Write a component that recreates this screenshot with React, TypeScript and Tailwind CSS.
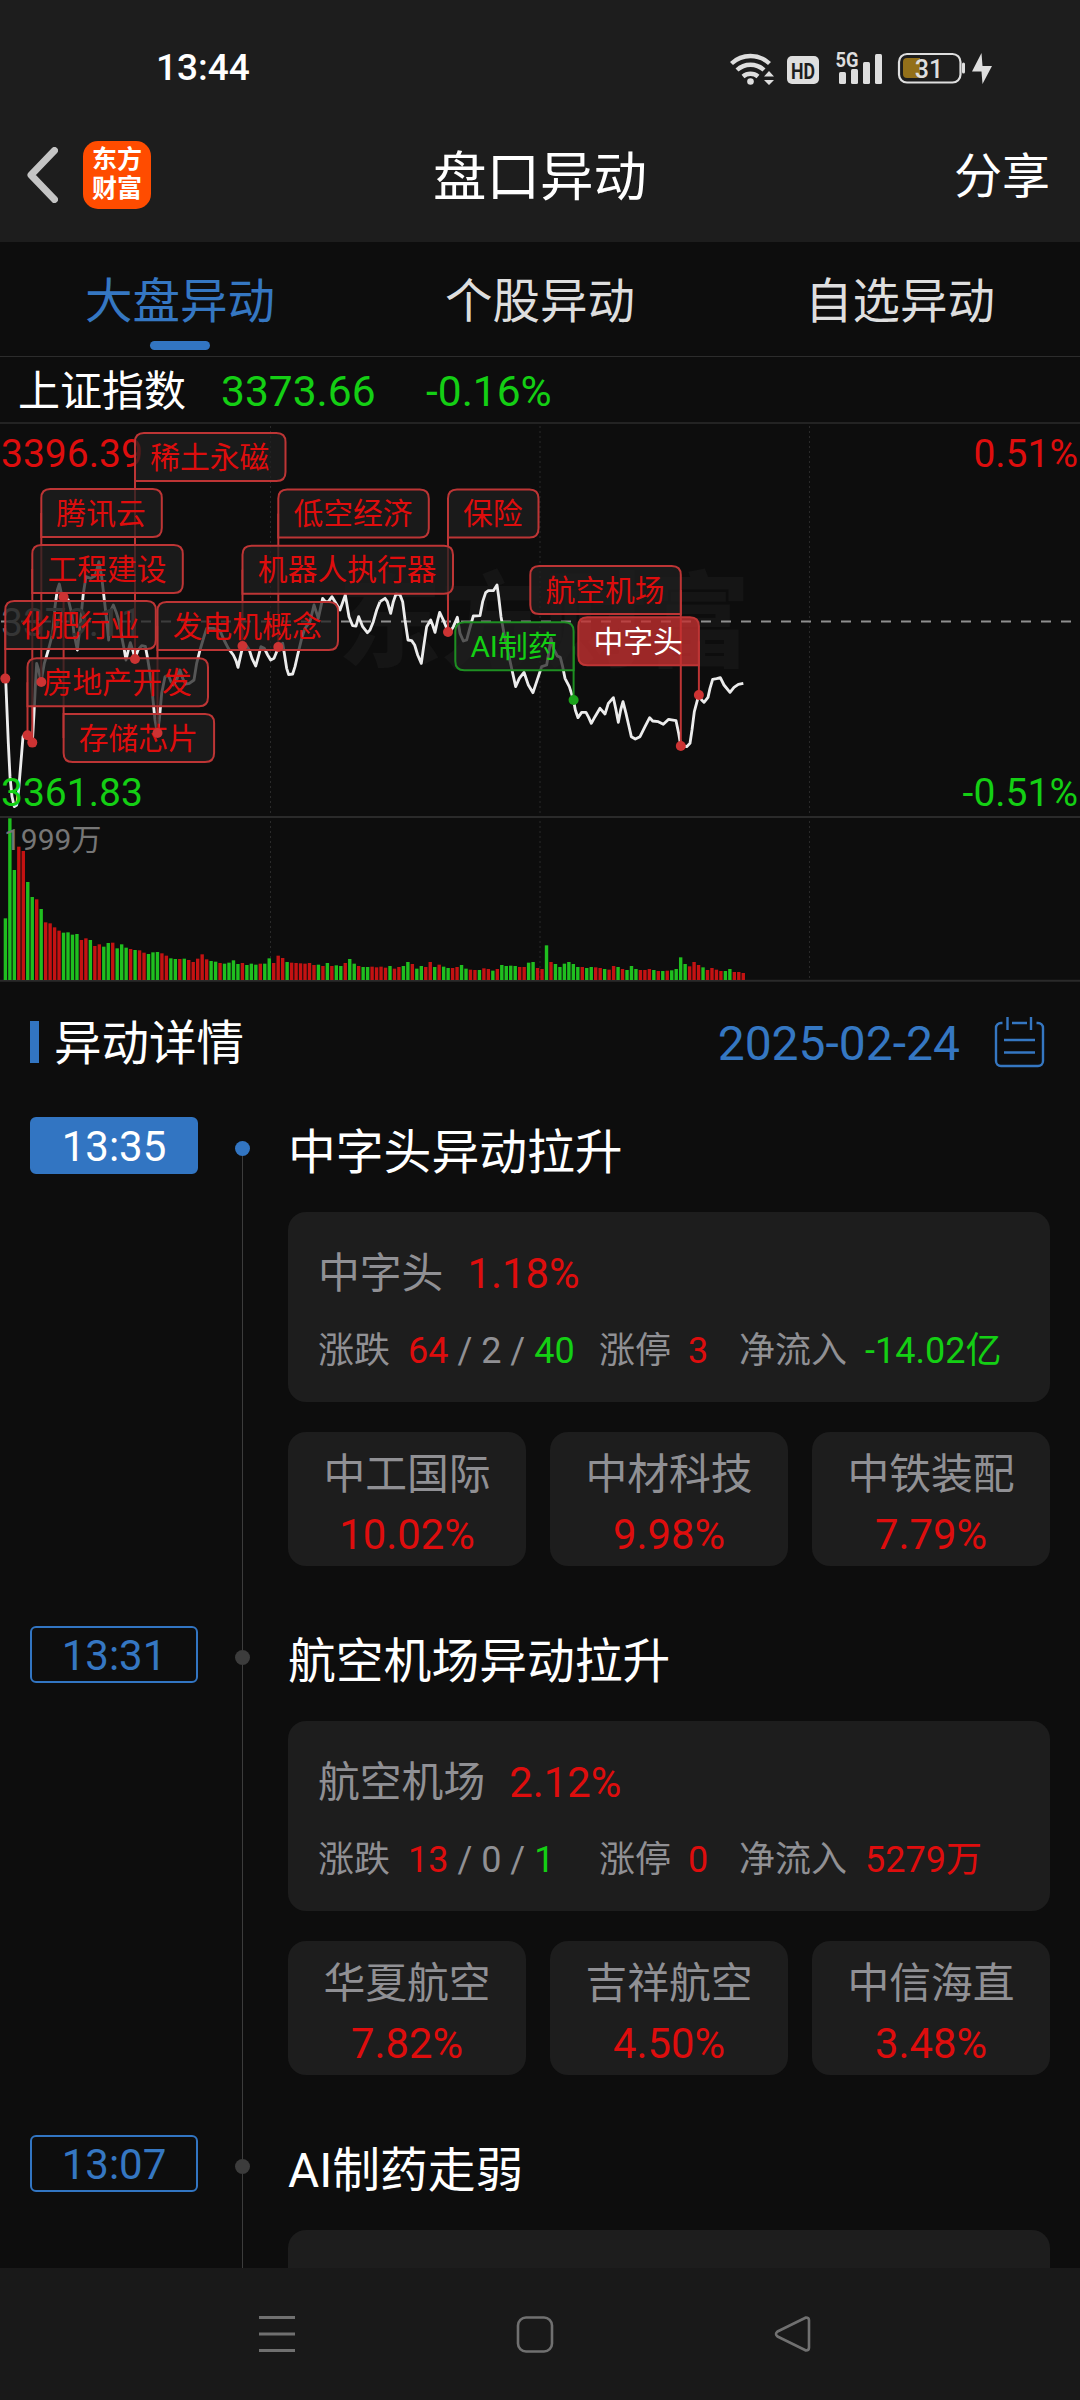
import clsx from "clsx";
import React from "react";

const RED = "#de0d0d";
const GREEN = "#14cf14";

// minute volumes, negative = falling minute
const volumes = [
  -185, -485, -330, 400, 387, -294, -249, 242, -213, 173, 170, 158, 148, -142,
  -143, -136, -138, 120, 125, -120, 102, 107, -100, -111, 112, -95, -107, -97,
  93, -90, 89, 82, -78, -83, -84, 80, 73, -65, -63, 63, -64, 60, 54, 64, 77, 62,
  -57, -55, 51, -49, -52, -59, -48, 51, -45, -49, -46, 49, -49, -65, 51, 73, 66,
  -54, 52, 51, 50, 49, 51, 45, -46, 42, -51, 42, -44, -42, 51, -63, -49, 42,
  -39, -39, 40, 38, 40, 37, -42, 34, 39, -42, -54, 48, -34, -42, 39, 54, -39,
  46, -40, -36, 36, 39, -45, -34, 31, 30, -30, 35, 33, -28, 33, -45, -42, -43,
  -42, 39, 39, -52, -54, 36, 33, -104, 54, -48, -39, -49, -54, -48, -39, 39,
  -36, -39, 38, 36, -33, 31, 42, -39, 33, -30, -42, -33, 30, 30, 33, -30, 27,
  -27, 28, -29, -33, -68, -48, 41, 54, 45, -38, 30, 36, 31, 27, -27, -33, 24,
  24, 21,
];

// price line, in thirds of a pixel
const morning =
  "17,775 20,850 25,970 30,1070 36,1130 43,1160 50,1155 56,1110 60,1060 65,1000 69,950 76,940 83,945 90,960 97,968 102,880 106,800 110,730 116,750 123,785 133,730 145,690 158,640 165,560 172,510 178,492 184,520 190,530 205,540 215,580 222,640 232,690 240,620 250,520 258,470 272,475 285,468 297,425 305,470 313,540 320,600 326,660 333,570 340,555 348,575 356,600 365,650 372,685 378,720 385,690 391,668 398,690 405,716 414,690 425,677 436,679 442,710 450,760 458,830 465,900 472,940 478,900 485,820 495,770 505,765 513,785 520,795 530,780 540,750 548,775 556,792 568,790 582,780 590,730 600,690 612,650 620,625 640,625 660,632 672,660 685,685 700,705 708,722 714,742 720,715 728,680 740,678 748,690 756,715 767,738 775,710 783,680 793,685 803,705 812,720 822,715 830,695 836,681 848,670 853,700 860,745 866,764 878,762 885,740 893,705 905,655 915,625 930,605 942,555 955,595 968,535 976,545 985,545 996,530 1005,545 1020,570 1036,525 1047,590 1058,617 1068,618 1076,590 1088,620 1102,638 1110,630 1120,605 1130,570 1140,545";
const afternoon =
  "0,545 15,535 22,545 32,580 40,545 48,522 60,524 68,545 75,600 84,660 95,662 104,675 113,705 124,730 131,680 140,620 152,600 158,615 165,637 172,605 179,577 190,600 200,625 210,636 220,620 232,592 240,640 250,663 260,660 268,630 280,588 300,587 308,545 317,518 325,512 340,512 351,495 356,530 363,590 372,640 385,700 396,750 407,800 418,775 432,757 445,795 459,818 470,785 485,740 500,735 506,700 513,655 520,685 532,708 541,712 548,740 555,775 568,800 580,838 586,870 594,893 605,877 618,877 626,892 634,910 645,890 660,865 675,882 685,850 700,833 707,865 715,907 722,870 729,845 738,880 746,915 754,950 766,957 780,950 795,920 809,893 818,903 835,905 850,913 866,898 888,902 896,940 902,976 920,980 930,970 936,930 943,875 956,826 965,840 972,847 984,832 990,805 998,778 1010,776 1021,773 1032,795 1050,817 1062,802 1075,793 1090,790";

type Flag = {
  text: string;
  x: number;
  y: number;
  w: number;
  dotY: number;
  right?: boolean;
  kind?: "down" | "active";
};

const flags: Flag[] = [
  { text: "稀土永磁", x: 135, y: 9, w: 150.5, dotY: 235 },
  { text: "腾讯云", x: 41.3, y: 65, w: 120.5, dotY: 258 },
  { text: "低空经济", x: 278.3, y: 65.6, w: 150.5, dotY: 223 },
  { text: "保险", x: 448, y: 65.6, w: 90.5, dotY: 208 },
  { text: "工程建设", x: 32.3, y: 121, w: 150.5, dotY: 318.6 },
  { text: "机器人执行器", x: 242.5, y: 121.7, w: 210.5, dotY: 222 },
  { text: "航空机场", x: 530.3, y: 142, w: 150.5, dotY: 322, right: true },
  { text: "化肥行业", x: 5.3, y: 177, w: 150.5, dotY: 254.6 },
  { text: "发电机概念", x: 157.5, y: 178, w: 180.5, dotY: 309 },
  { text: "AI制药", x: 455.3, y: 198.3, w: 118.3, dotY: 276, right: true, kind: "down" },
  { text: "房地产开发", x: 27.5, y: 234.3, w: 180.5, dotY: 311.3 },
  { text: "存储芯片", x: 63.6, y: 290, w: 150.5, dotY: 173 },
  { text: "中字头", x: 578.3, y: 193.3, w: 120.6, dotY: 271, right: true, kind: "active" },
];

const FLAG_H = 48;

const strokeOf = (f: Flag) => (f.kind === "down" ? "#1e8f22" : "#bd3535");
const poleX = (f: Flag) => (f.right ? f.x + f.w : f.x);

function flagPath({ x, y, w, right, dotY }: Flag) {
  const r = 9;
  const above = dotY < y;
  const bl = !right && !above ? 0 : r;
  const br = right ? 0 : r;
  const tl = !right && above ? 0 : r;
  return `M${x + tl} ${y}H${x + w - r}q${r} 0 ${r} ${r}V${y + FLAG_H - br}q0 ${br} ${-br} ${br}H${x + bl}q${-bl} 0 ${-bl} ${-bl}V${y + tl}q0 ${-tl} ${tl} ${-tl}Z`;
}

function Chart() {
  return (
    <svg width="1080" height="558" className="block" fontSize="39">
      <text x="338" y="235" fontSize="103" fontWeight="900" fill="#151515">
        东方财富
      </text>
      <g stroke="#2a2a2a" strokeWidth="1" strokeDasharray="2 3">
        <path d="M270.5 2V556M540 2V556M809.5 2V556" />
      </g>
      <path d="M0 393H1080M0 556.8H1080" stroke="#2a2a2a" strokeWidth="2" />
      <path d="M1 197.5H1080" stroke="#8f8f8f" strokeWidth="2.2" strokeDasharray="10 10" />

      {volumes.map((v, i) => (
        <rect
          key={i}
          x={3.7 + i * 4.472}
          y={556 - Math.abs(v) / 3}
          width="3.4"
          height={Math.abs(v) / 3}
          fill={v < 0 ? "#1fbf1f" : "#c41212"}
        />
      ))}

      <g
        transform="translate(0 -4) scale(0.33333)"
        fill="none"
        stroke="#ececec"
        strokeWidth="8.5"
        strokeLinejoin="round"
      >
        <polyline points={morning} />
        <polyline points={afternoon} transform="translate(1140 0)" />
      </g>

      <text x="1" y="43" fill={RED}>3396.39</text>
      <text x="1078" y="43" fill={RED} textAnchor="end">0.51%</text>
      <text x="1" y="212" fill="#707070">3379.11</text>
      <text x="1" y="382" fill={GREEN}>3361.83</text>
      <text x="1078" y="382" fill={GREEN} textAnchor="end">-0.51%</text>
      <text x="4" y="426" fontSize="30" fill="#767676">1999万</text>

      {flags.map((f) => (
        <path
          key={f.text}
          d={`M${poleX(f)} ${f.y + FLAG_H / 2}V${f.dotY}`}
          stroke={strokeOf(f)}
          strokeWidth="2"
        />
      ))}
      {flags.map((f) => (
        <g key={f.text}>
          <path
            d={flagPath(f)}
            fill={f.kind === "active" ? "rgba(197,48,48,.78)" : "rgba(32,32,32,.735)"}
            stroke={strokeOf(f)}
            strokeWidth="2"
          />
          <text
            x={f.x + f.w / 2 - 0.5}
            y={f.y + 34.5}
            fontSize="29.8"
            textAnchor="middle"
            fill={f.kind === "active" ? "#fff" : f.kind === "down" ? GREEN : RED}
          >
            {f.text}
          </text>
        </g>
      ))}
      {flags.map((f) => (
        <circle
          key={f.text}
          cx={poleX(f)}
          cy={f.dotY}
          r="5"
          fill={f.kind === "down" ? "#1ba31b" : "#cc3333"}
        />
      ))}
    </svg>
  );
}

function StatusBar() {
  return (
    <div className="flex h-[110px] items-start justify-between pl-[156px] pr-[86px] pt-[40px] text-white">
      <span className="pt-[9px] text-[37px] font-medium leading-[38px]">13:44</span>
      <svg width="264" height="48" viewBox="730 40 264 48" fill="#dedede">
        <g fill="none" stroke="#dedede" strokeWidth="4.4">
          <path d="M731.5 63.5a28 28 0 0 1 38 0" />
          <path d="M737 70a20 20 0 0 1 27 0" />
          <path d="M743 76.5a11.5 11.5 0 0 1 15 0" />
        </g>
        <circle cx="750.5" cy="81.5" r="3.3" />
        <path d="M769 71l5 5.5h-10zM769 85l5-5h-10z" />
        <rect x="787" y="56" width="32" height="28" rx="5" />
        <text x="803" y="78.5" fontSize="22.5" fontWeight="700" textAnchor="middle" fill="#1d1d1d" textLength="24" lengthAdjust="spacingAndGlyphs">
          HD
        </text>
        <rect x="839" y="72" width="7" height="12" rx="1.5" />
        <rect x="851" y="69" width="7" height="15" rx="1.5" />
        <rect x="863" y="62" width="7" height="22" rx="1.5" />
        <rect x="875" y="54" width="7" height="30" rx="1.5" />
        <text x="835.5" y="67" fontSize="20.5" fontWeight="700" textLength="23" lengthAdjust="spacingAndGlyphs">
          5G
        </text>
        <rect x="899" y="54" width="61.5" height="28.5" rx="8" fill="none" stroke="#dedede" strokeWidth="2.2" />
        <rect x="962" y="62.5" width="3" height="11" rx="1.5" />
        <path d="M907 58h13v20h-13a4 4 0 0 1-4-4v-12a4 4 0 0 1 4-4z" fill="#93701a" />
        <text x="929" y="77.5" fontSize="25" fontWeight="500" textAnchor="middle">
          31
        </text>
        <path d="M981.5 53L972 71.5h9.5L982.5 84 992 66h-9.5z" />
      </svg>
    </div>
  );
}

function Header() {
  return (
    <div className="grid h-[132px] grid-cols-3 items-center px-[27px] pb-[3px]">
      <div className="flex items-center gap-[25px]">
        <svg width="31" height="56" fill="none" stroke="#c4c4c4" strokeWidth="7" strokeLinecap="round" strokeLinejoin="round">
          <path d="M27.5 3.5L4 28l23.500 24.500" />
        </svg>
        <div className="flex h-[68px] w-[68px] flex-col items-center justify-center rounded-[15px] bg-[#ff4c00] pb-0.5 text-[25px] font-bold leading-[29px] text-white">
          <span>东方</span>
          <span>财富</span>
        </div>
      </div>
      <h1 className="pt-[7px] text-center text-[53.5px] leading-[60px] text-white">盘口异动</h1>
      <span className="pr-[3px] pt-[5px] text-right text-[48px] leading-[60px] text-white">分享</span>
    </div>
  );
}

const tabs = ["大盘异动", "个股异动", "自选异动"];

function Tabs() {
  return (
    <div className="grid h-[115px] grid-cols-3 border-b border-[#2c2c2c] text-[47.5px]">
      {tabs.map((tab, i) => (
        <div
          key={tab}
          className={clsx(
            "flex flex-col items-center pt-[25px] leading-[70px]",
            i === 0 ? "text-[#3577c2]" : "text-[#dedede]",
          )}
        >
          {tab}
          {i === 0 && <div className="mt-1 h-[9px] w-[60px] rounded-full bg-[#3275c2]" />}
        </div>
      ))}
    </div>
  );
}

type Event = {
  time: string;
  title: string;
  name?: string;
  pct?: string;
  up?: number;
  flat?: number;
  down?: number;
  limit?: number;
  flow?: string;
  stocks?: string[][];
};

const events: Event[] = [
  {
    time: "13:35",
    title: "中字头异动拉升",
    name: "中字头",
    pct: "1.18%",
    up: 64,
    flat: 2,
    down: 40,
    limit: 3,
    flow: "-14.02亿",
    stocks: [
      ["中工国际", "10.02%"],
      ["中材科技", "9.98%"],
      ["中铁装配", "7.79%"],
    ],
  },
  {
    time: "13:31",
    title: "航空机场异动拉升",
    name: "航空机场",
    pct: "2.12%",
    up: 13,
    flat: 0,
    down: 1,
    limit: 0,
    flow: "5279万",
    stocks: [
      ["华夏航空", "7.82%"],
      ["吉祥航空", "4.50%"],
      ["中信海直", "3.48%"],
    ],
  },
  { time: "13:07", title: "AI制药走弱" },
];

function EventItem({ event, active }: { event: Event; active: boolean }) {
  return (
    <div className="flex h-[509px] shrink-0 pl-[30px] pr-[30px]">
      <div
        className={clsx(
          "flex h-[57px] w-[168px] items-center justify-center rounded-md border-2 border-[#3275c2] pt-[3px] text-[42px] leading-none",
          active ? "bg-[#3275c2] text-white" : "text-[#3577c2]",
        )}
      >
        {event.time}
      </div>
      <div className="ml-[37px] flex w-[15px] flex-col items-center">
        <div className={clsx("h-6 w-px", !active && "bg-[#3c3c3c]")} />
        <div className={clsx("h-[15px] w-[15px] rounded-full", active ? "bg-[#3275c2]" : "bg-[#3c3c3c]")} />
        <div className="w-px flex-1 bg-[#3c3c3c]" />
      </div>
      <div className="ml-[38px] w-[762px]">
        <h3 className="mb-[25px] h-[70px] pt-0.5 text-[47.8px] leading-[68px] text-white">{event.title}</h3>
        <div className="h-[190px] rounded-[18px] bg-[#1d1d1d] px-[30px] text-[#909094]">
          {event.name && (
            <>
              <div className="flex gap-6 pt-[32px] text-[41.800px] leading-[60px]">
                <span>{event.name}</span>
                <span className="text-[#de0d0d]">{event.pct}</span>
              </div>
              <div className="flex whitespace-nowrap pt-[22px] text-[36px] leading-[50px]">
                <div className="w-[281px]">
                  <span className="mr-[18px]">涨跌</span>
                  <span className="text-[#de0d0d]">{event.up}</span> / {event.flat} /{" "}
                  <span className="text-[#14cf14]">{event.down}</span>
                </div>
                <div className="w-[140px]">
                  <span className="mr-[17px]">涨停</span>
                  <span className="text-[#de0d0d]">{event.limit}</span>
                </div>
                <div>
                  <span className="mr-[18px]">净流入</span>
                  <span className={event.flow?.startsWith("-") ? "text-[#14cf14]" : "text-[#de0d0d]"}>
                    {event.flow}
                  </span>
                </div>
              </div>
            </>
          )}
        </div>
        <div className="mt-[30px] grid grid-cols-3 gap-6">
          {event.stocks?.map(([name, pct]) => (
            <div
              key={name}
              className="flex h-[134px] flex-col items-center rounded-[18px] bg-[#1d1d1d] pt-[13px] text-[41.800px] leading-[60px] text-[#909094]"
            >
              <span>{name}</span>
              <span className="text-[#de0d0d]">{pct}</span>
            </div>
          ))}
        </div>
      </div>
    </div>
  );
}

function App() {
  return (
    <div className="flex h-[2400px] w-[1080px] flex-col overflow-hidden bg-[#0d0d0d] font-[Roboto,'Noto_Sans_CJK_SC',sans-serif]">
      <header className="bg-[#1d1d1d]">
        <StatusBar />
        <Header />
      </header>
      <Tabs />
      <div className="flex h-[67px] items-center border-b-2 border-[#232323] pl-[18px] pt-1 text-[42px] leading-[60px] text-[#14cf14]">
        <span className="w-[203px] text-white">上证指数</span>
        <span className="w-[205px] text-[42.5px]">3373.66</span>
        <span className="text-[42.5px]">-0.16%</span>
      </div>
      <Chart />

      <main className="flex min-h-0 flex-1 flex-col overflow-hidden">
        <div className="flex h-[135px] shrink-0 items-center pb-[15px] pl-[30px] pr-[35px]">
          <div className="h-[42px] w-[9px] bg-[#3275c2]" />
          <h2 className="ml-[15px] flex-1 pt-[3px] text-[47.5px] leading-[60px] text-white">异动详情</h2>
          <span className="pt-[3px] text-[48px] leading-[60px] text-[#3577c2]">2025-02-24</span>
          <svg className="ml-[34px]" width="51" height="52" fill="none" stroke="#3577c2" strokeWidth="2.4">
            <path d="M8.5 7H7a5 5 0 0 0-5 5v33a5 5 0 0 0 5 5h37a5 5 0 0 0 5-5V12a5 5 0 0 0-5-5h-1.500M18 7h15" />
            <path d="M13.5 1v13M37 1v13M10 24h31M10 36.500h31" />
          </svg>
        </div>
        {events.map((event, i) => (
          <EventItem key={event.time} event={event} active={i === 0} />
        ))}
      </main>

      <nav className="flex h-[132px] shrink-0 items-start justify-between bg-[#191919] pl-[258px] pr-[268px] pt-[47px]">
        <svg width="38" height="40" stroke="#707070" strokeWidth="3">
          <path d="M1 2.5H37M1 19H37M1 35.500H37" />
        </svg>
        <svg width="38" height="40" fill="none" stroke="#707070" strokeWidth="2.6">
          <rect x="2" y="2.5" width="34" height="34" rx="8" />
        </svg>
        <svg width="38" height="40" fill="none" stroke="#707070" strokeWidth="2.6" strokeLinejoin="round">
          <path d="M32 2.5L3.500 16.500q-3 2.500 0 5L32 35.500q3 0 3-3V5.500q0-3-3-3z" />
        </svg>
      </nav>
    </div>
  );
}

export default App;
